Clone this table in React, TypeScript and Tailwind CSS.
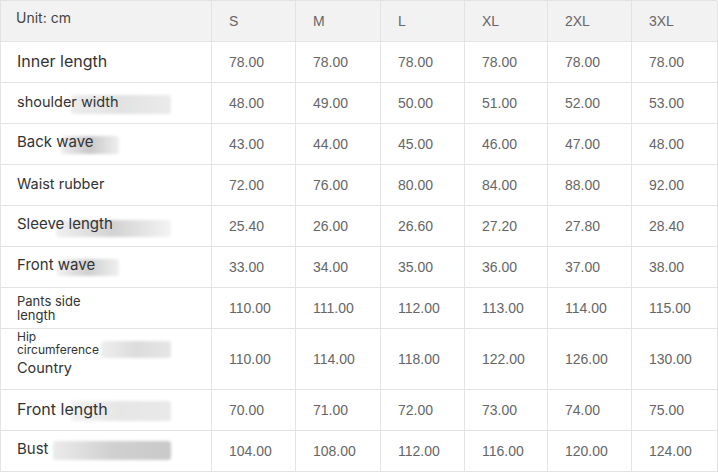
import React from 'react';

const sizes = ['S', 'M', 'L', 'XL', '2XL', '3XL'];

type Row = {
  label: React.ReactNode;
  values: string[];
  tall?: boolean;
  blur?: string;
};

const rows: Row[] = [
  {
    label: <span className="block text-[16px]">Inner length</span>,
    values: ['78.00', '78.00', '78.00', '78.00', '78.00', '78.00'],
  },
  {
    label: <span className="block text-[14.5px]">shoulder width</span>,
    values: ['48.00', '49.00', '50.00', '51.00', '52.00', '53.00'],
    blur: 'left-[70px] w-[100px] top-[12px] h-[19px] bg-gradient-to-r from-[#ececec] via-[#e2e2e2] to-[#ebebeb]',
  },
  {
    label: <span className="block text-[15px]">Back wave</span>,
    values: ['43.00', '44.00', '45.00', '46.00', '47.00', '48.00'],
    blur: 'left-[60px] w-[58px] top-[12px] h-[18px] bg-gradient-to-r from-[#eeeeee] via-[#c9c9c9] to-[#efefef]',
  },
  {
    label: <span className="block text-[14.5px]">Waist rubber</span>,
    values: ['72.00', '76.00', '80.00', '84.00', '88.00', '92.00'],
  },
  {
    label: <span className="block text-[15px]">Sleeve length</span>,
    values: ['25.40', '26.00', '26.60', '27.20', '27.80', '28.40'],
    blur: 'left-[55px] w-[115px] top-[14px] h-[17px] bg-gradient-to-r from-[#f0f0f0] via-[#d2d2d2] to-[#f4f4f4]',
  },
  {
    label: <span className="block text-[15px]">Front wave</span>,
    values: ['33.00', '34.00', '35.00', '36.00', '37.00', '38.00'],
    blur: 'left-[56px] w-[62px] top-[12px] h-[17px] bg-gradient-to-r from-[#f2f2f2] via-[#cfcfcf] to-[#f0f0f0]',
  },
  {
    label: (
      <span className="flex flex-col pt-[2px] text-[13px] leading-[14px]">
        <span className="block">Pants side</span>
        <span className="block">length</span>
      </span>
    ),
    values: ['110.00', '111.00', '112.00', '113.00', '114.00', '115.00'],
  },
  {
    label: (
      <span className="flex flex-col">
        <span className="block text-[12px] leading-[12px]">Hip</span>
        <span className="block text-[12px] leading-[13px]">circumference</span>
        <span className="block text-[14.5px] leading-[18px] mt-[3px]">Country</span>
      </span>
    ),
    values: ['110.00', '114.00', '118.00', '122.00', '126.00', '130.00'],
    tall: true,
    blur: 'left-[100px] w-[70px] top-[12px] h-[17px] bg-gradient-to-r from-[#eeeeee] via-[#dcdcdc] to-[#e6e6e6]',
  },
  {
    label: <span className="block text-[16px]">Front length</span>,
    values: ['70.00', '71.00', '72.00', '73.00', '74.00', '75.00'],
    blur: 'left-[70px] w-[100px] top-[11px] h-[20px] bg-gradient-to-r from-[#f2f2f2] via-[#e6e6e6] to-[#e9e9e9]',
  },
  {
    label: <span className="block text-[15px]">Bust</span>,
    values: ['104.00', '108.00', '112.00', '116.00', '120.00', '124.00'],
    blur: 'left-[52px] w-[118px] top-[10px] h-[19px] bg-gradient-to-r from-[#ebebeb] via-[#d0d0d0] to-[#c9c9c9]',
  },
];

export default function App() {
  return (
    <div className="w-[718px] h-[476px] bg-white">
      <div className="grid grid-cols-[211px_84px_85px_84px_83px_84px_86px] border-l border-t border-[#e3e3e3] w-[717px] font-['Liberation_Sans',Arial,sans-serif]">
        {/* header */}
        <div className="h-[41px] bg-[#f2f2f2] border-r border-b border-[#e3e3e3] pl-[15px] pt-[6px] text-[14px] text-[#444] font-['Inter',sans-serif]">
          Unit: cm
        </div>
        {sizes.map((s) => (
          <div
            key={s}
            className="h-[41px] bg-[#f2f2f2] border-r border-b border-[#e3e3e3] pl-[17px] flex items-center text-[14px] text-[#666]"
          >
            {s}
          </div>
        ))}

        {rows.map((r, i) => (
          <React.Fragment key={i}>
            <div
              className={`relative border-r border-b border-[#e3e3e3] pl-[16px] flex text-[#333] font-['Inter',sans-serif] ${
                r.tall ? 'h-[61px] items-start pt-[2px]' : 'h-[41px] items-center pb-[3px]'
              }`}
            >
              {r.blur && <div className={`absolute rounded-[3px] blur-[1.5px] ${r.blur}`} />}
              <div className="relative">{r.label}</div>
            </div>
            {r.values.map((v, j) => (
              <div
                key={j}
                className={`border-r border-b border-[#e3e3e3] pl-[17px] flex items-center text-[14px] text-[#666] ${
                  r.tall ? 'h-[61px]' : 'h-[41px]'
                }`}
              >
                {v}
              </div>
            ))}
          </React.Fragment>
        ))}
      </div>
    </div>
  );
}
